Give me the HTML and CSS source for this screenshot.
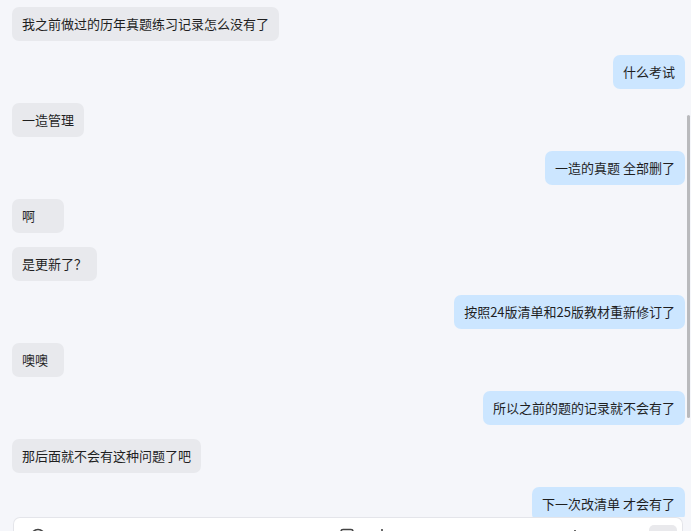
FILE: index.html
```html
<!DOCTYPE html>
<html lang="zh-CN">
<head>
<meta charset="utf-8">
<title>聊天</title>
<link rel="stylesheet" href="styles.css">
</head>
<body>
<div class="page">
  <div class="chat">
    <div class="msg left">我之前做过的历年真题练习记录怎么没有了</div>
    <div class="msg right">什么考试</div>
    <div class="msg left">一造管理</div>
    <div class="msg right">一造的真题 全部删了</div>
    <div class="msg left">啊</div>
    <div class="msg left">是更新了？</div>
    <div class="msg right">按照24版清单和25版教材重新修订了</div>
    <div class="msg left">噢噢</div>
    <div class="msg right">所以之前的题的记录就不会有了</div>
    <div class="msg left">那后面就不会有这种问题了吧</div>
    <div class="msg right">下一次改清单 才会有了</div>
  </div>
  <div class="composer">
    <div class="tools">
      <svg class="ico ico-a" width="16" height="16" viewBox="0 0 16 16"><circle cx="8" cy="8" r="6.5" fill="none" stroke="#444" stroke-width="1.6"/></svg>
      <span class="spacer"></span>
      <svg class="ico ico-b" width="14" height="16" viewBox="0 0 14 16"><rect x="1" y="1.5" width="12" height="13" rx="2" fill="none" stroke="#444" stroke-width="1.6"/></svg>
      <svg class="ico ico-c" width="8" height="16" viewBox="0 0 8 16"><path d="M4 1v14" stroke="#444" stroke-width="1.6"/></svg>
      <span class="spacer2"></span>
      <svg class="ico ico-d" width="6" height="16" viewBox="0 0 6 16"><path d="M3 2v12" stroke="#444" stroke-width="1.6"/></svg>
      <span class="send"></span>
    </div>
  </div>
  <div class="scrollbar"></div>
</div>
</body>
</html>
```

FILE: styles.css
```css
* { box-sizing: border-box; }
html, body {
  margin: 0;
  padding: 0;
  background: #f5f6fa;
}
.page {
  position: relative;
  width: 691px;
  height: 531px;
  overflow: hidden;
  font-family: "Noto Sans CJK SC", "Noto Sans", sans-serif;
  font-size: 13px;
  color: #1f1f1f;
}
.chat {
  height: 517px;
  overflow: hidden;
  display: flex;
  flex-direction: column;
  gap: 14px;
  padding: 7px 6px 0 12px;
}
.msg {
  height: 34px;
  line-height: 34px;
  padding: 0 10px;
  border-radius: 7px;
  min-width: 52px;
  white-space: nowrap;
  flex: none;
}
.left {
  align-self: flex-start;
  background: #e8e9ed;
}
.right {
  align-self: flex-end;
  background: #cce6ff;
}
.composer {
  margin: 0 8px 0 13px;
  height: 60px;
  background: #ffffff;
  border: 1px solid #e4e5ea;
  border-bottom: none;
  border-radius: 7px 7px 0 0;
}
.tools {
  display: flex;
  align-items: flex-start;
  padding: 10px 5px 0 16px;
}
.ico { display: block; flex: none; }
.spacer { width: 294px; flex: none; }
.ico-c { margin-left: 24px; }
.spacer2 { width: 186px; flex: none; }
.send {
  margin-left: auto;
  margin-top: -3px;
  width: 28px;
  height: 28px;
  border-radius: 5px;
  background: #e9e9ec;
}
.scrollbar {
  position: absolute;
  right: 1px;
  top: 115px;
  width: 3px;
  height: 303px;
  border-radius: 2px;
  background: #b9babd;
}
```
